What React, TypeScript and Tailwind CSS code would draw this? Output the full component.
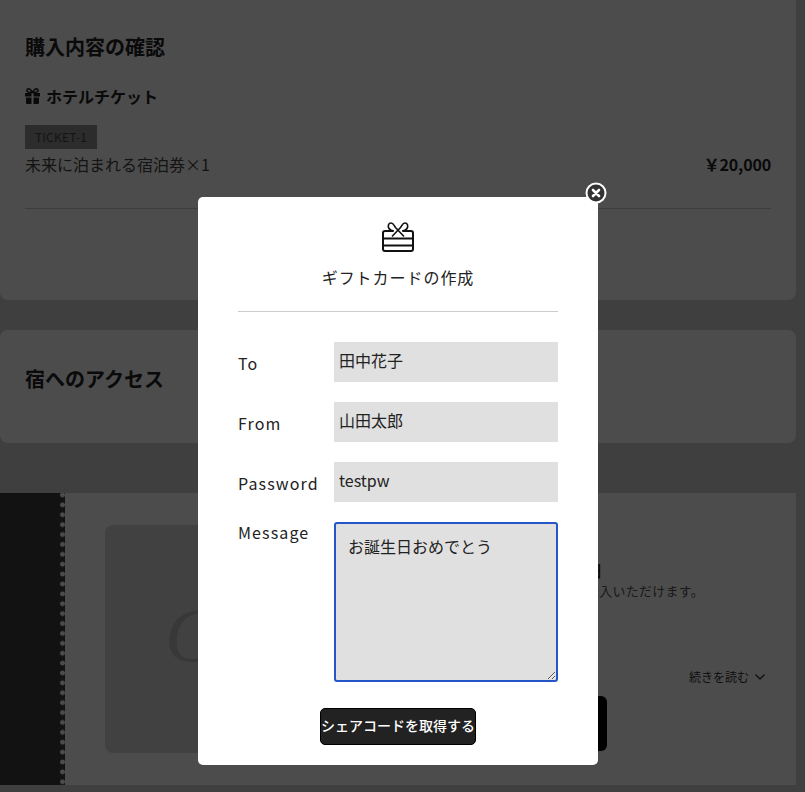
import { ChevronDown } from 'lucide-react'

const font = { fontFamily: '"Noto Sans CJK JP", "Noto Sans", sans-serif' }

function GiftSolidIcon() {
  return (
    <svg width="15" height="16" viewBox="0 0 15 16" className="block shrink-0 text-[#222]">
      <path d="M7.500 4.500C6 2 5 .8 3.700.8 2.300.8 1.700 2 2 3c.3 1 1.500 1.500 5.500 1.500zM7.500 4.500C9 2 10 .8 11.300.8c1.400 0 2 1.200 1.700 2.200-.3 1-1.500 1.500-5.500 1.500z" fill="none" stroke="currentColor" strokeWidth="1.500" />
      <path d="M0 5h6.500v3.500H0zM8.500 5H15v3.500H8.500zM1 9.500h5.500V16H2a1 1 0 0 1-1-1zM8.500 9.500H14V15a1 1 0 0 1-1 1H8.500z" fill="currentColor" />
    </svg>
  )
}

function GiftCardIcon() {
  return (
    <svg width="32" height="30" viewBox="0 0 32 30" fill="none" stroke="#111" strokeWidth="2" className="block">
      <path d="M11 9H3a2 2 0 0 0-2 2v16a2 2 0 0 0 2 2h26a2 2 0 0 0 2-2V11a2 2 0 0 0-2-2h-8" />
      <path d="M1 16.500h30M1 23.500h30" strokeWidth="1.800" />
      <path d="M10 14.500L18.500 5.500C20 3.800 20.500 1 23 1c2.500 0 3.500 3 2 5.500-.8 1.300-2.500 2.500-5 2.500" strokeWidth="1.600" />
      <path d="M22 14.500L13.500 5.500C12 3.800 11.500 1 9 1 6.500 1 5.500 4 7 6.500c.8 1.300 2.500 2.500 5 2.500" strokeWidth="1.600" />
    </svg>
  )
}

function CloseIcon() {
  return (
    <svg width="22" height="22" viewBox="0 0 22 22" className="block">
      <circle cx="11" cy="11" r="9.500" fill="#333" stroke="#fff" strokeWidth="2" />
      <path d="M8 8l6 6M14 8l-6 6" stroke="#fff" strokeWidth="2.600" strokeLinecap="round" />
    </svg>
  )
}

function Field({ label, value }: { label: string; value: string }) {
  return (
    <div className="flex items-center h-10 mb-5">
      <label className="w-24 text-base tracking-[0.07em] text-[#222] pt-0.5">{label}</label>
      <input
        type="text"
        readOnly
        value={value}
        className="w-56 h-10 bg-[#e0e0e0] px-[5px] pb-1 text-base text-[#222] outline-none"
        style={font}
      />
    </div>
  )
}

export default function App() {
  return (
    <div className="relative h-[792px] overflow-hidden bg-[#d4d4d4] pr-[9px]" style={font}>
      <div className="bg-white rounded-b-lg h-[300px] px-[25px] pt-[33px]">
        <h2 className="text-xl font-bold leading-7 text-[#222]">購入内容の確認</h2>
        <div className="flex items-center gap-[6px] mt-[23px] h-6 text-[#222]">
          <GiftSolidIcon />
          <span className="text-base font-bold">ホテルチケット</span>
        </div>
        <span className="block mt-[17px] bg-[#939393] w-[72px] h-6 leading-6 text-center text-xs tracking-[0.02em] text-[#444]">TICKET-1</span>
        <div className="flex justify-between items-center h-6 mt-[3px] text-base text-[#444]">
          <span>未来に泊まれる宿泊券×1</span>
          <span className="font-bold text-[#222] tracking-[-0.01em]">￥20,000</span>
        </div>
        <div className="border-b border-[#ccc] mt-[32px]" />
      </div>

      <div className="bg-white rounded-lg h-[113px] mt-[30px] px-[25px] pt-[35px]">
        <h2 className="text-xl font-bold leading-7 text-[#222]">宿へのアクセス</h2>
      </div>

      <div className="flex h-[292px] mt-[50px] bg-white">
        <div className="relative w-[65px] shrink-0 bg-[#3f3f3f]">
          <div className="absolute right-0 top-0 bottom-0 w-[5px] bg-[radial-gradient(circle,#fff_2px,transparent_2.800px)] bg-[length:5px_9.900px] bg-[position:0_-3px]" />
        </div>
        <div className="flex flex-1 pl-10 pt-8">
          <div className="w-[260px] h-[228px] rounded-lg bg-[#d9d9d9] overflow-hidden pl-[60px] pt-[72px]">
            <span className="text-[76px] leading-none italic text-[#bbb]" style={{ fontFamily: '"Liberation Serif", serif' }}>C</span>
          </div>
          <div className="flex-1 pl-[28px] pr-[25px]">
            <div className="text-right pr-[170px] mt-[35px] h-5 text-base font-bold leading-5 text-[#222]">チケット詳細</div>
            <p className="flex justify-end pr-[67px] text-[13px] tracking-[0.02em] text-[#555] leading-5 mt-px whitespace-nowrap">こちらのチケットはご購入いただけます。</p>
            <div className="flex justify-end items-center gap-[3px] mt-[68px] pr-[3px] text-xs text-[#333]">
              続きを読む <ChevronDown size={16} strokeWidth={2} />
            </div>
            <div className="h-[55px] w-[234px] mt-[11px] -ml-[20px] rounded-md bg-black" />
          </div>
        </div>
      </div>

      {/* overlay */}
      <div className="absolute inset-0 bg-black/70" />

      {/* modal */}
      <div className="absolute left-[198px] top-[197px] w-[400px] h-[568px] bg-white rounded-[5px] px-10 pt-[25px]">
        <div className="flex justify-center"><GiftCardIcon /></div>
        <h3 className="text-center text-base tracking-[0.06em] leading-6 text-[#222] mt-[13px]">ギフトカードの作成</h3>
        <div className="border-b border-[#ccc] mt-[22px] mb-[30px]" />
        <Field label="To" value="田中花子" />
        <Field label="From" value="山田太郎" />
        <Field label="Password" value="testpw" />
        <div className="flex items-start">
          <label className="w-24 text-base tracking-[0.07em] text-[#222] -mt-0.5">Message</label>
          <textarea
            readOnly
            defaultValue="お誕生日おめでとう"
            className="block w-56 h-40 bg-[#e0e0e0] border-2 border-[#2456c8] rounded-[3px] px-3 py-2.5 text-base text-[#222] outline-none"
            style={font}
          />
        </div>
        <div className="flex justify-center mt-[26px]">
          <button className="w-[156px] h-[37px] pb-1 bg-[#222] border border-black rounded-[5px] text-white text-sm font-medium whitespace-nowrap">シェアコードを取得する</button>
        </div>
        <button className="absolute -top-[15px] -right-[9px]"><CloseIcon /></button>
      </div>
    </div>
  )
}
